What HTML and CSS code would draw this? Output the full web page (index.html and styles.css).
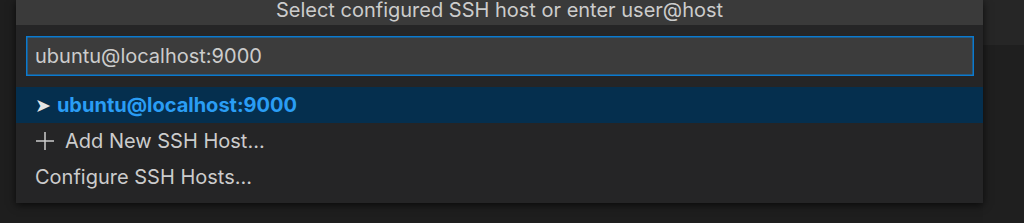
FILE: index.html
```html
<!DOCTYPE html>
<html>
<head>
<meta charset="utf-8">
<link rel="stylesheet" href="styles.css">
</head>
<body>
<div class="stage">
  <div class="panel">
    <div class="title">Select configured SSH host or enter user@host</div>
    <div class="content">
      <div class="input">ubuntu@localhost:9000</div>
      <ul class="list">
        <li class="row selected"><span class="arrow">&#10148;</span><span class="label">ubuntu@localhost:9000</span></li>
        <li class="row"><svg class="plus" width="22" height="22" viewBox="0 0 22 22"><path d="M11 2v18M2 11h18" stroke="#cccccc" stroke-width="1.5" fill="none"/></svg><span class="label">Add New SSH Host...</span></li>
        <li class="row"><span class="label">Configure SSH Hosts...</span></li>
      </ul>
    </div>
  </div>
  <div class="side"></div>
</div>
</body>
</html>
```
FILE: styles.css
```css
html, body {
  margin: 0;
  padding: 0;
}
body {
  width: 1024px;
  height: 223px;
  overflow: hidden;
  background: #1e1e1e;
  font-family: "Inter", "Liberation Sans", sans-serif;
  color: #cccccc;
}
.stage {
  display: flex;
  padding-left: 16px;
  height: 223px;
}
.panel {
  width: 967px;
  height: 203px;
  background: #252526;
  box-shadow: 0 2px 8px rgba(0,0,0,0.7);
  display: flex;
  flex-direction: column;
  position: relative;
  z-index: 1;
}
.side {
  flex: 1;
  background: linear-gradient(#262626 0, #262626 45px, #1f1f1f 45px);
}
.title {
  height: 25px;
  background: #3a3a3a;
  text-align: center;
  font-size: 20px;
  line-height: 20px;
  color: #cccccc;
}
.content {
  padding: 11px 9px 0 10px;
}
.input {
  height: 38px;
  border: 1px solid #0a7ad0;
  box-shadow: inset 0 0 0 0.5px #0a7ad0;
  background: #3c3c3c;
  box-sizing: content-box;
  font-size: 20px;
  line-height: 38px;
  padding: 0 8px;
  color: #cccccc;
}
.list {
  list-style: none;
  margin: 11px -9px 0 -10px;
  padding: 0;
}
.row {
  height: 36px;
  display: flex;
  align-items: center;
  padding-left: 19px;
  font-size: 20px;
}
.row.selected {
  background: #052f4e;
  color: #2a9df4;
  font-weight: 700;
}
.arrow {
  color: #e6e6e6;
  font-size: 19px;
  margin-right: 6px;
  font-family: "DejaVu Sans", sans-serif;
}
.plus {
  margin-right: 9px;
  margin-left: -1px;
}
```
